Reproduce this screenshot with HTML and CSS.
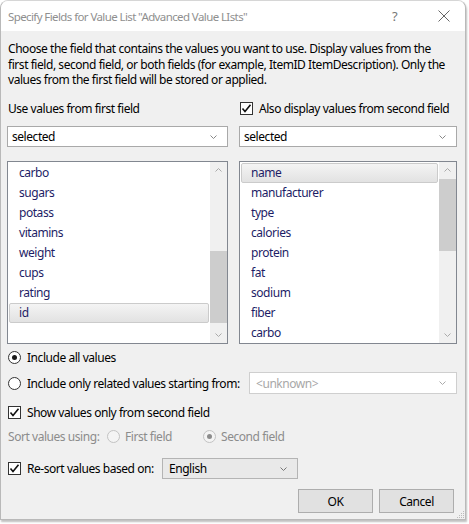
FILE: index.html
```html
<!DOCTYPE html>
<html>
<head>
<meta charset="utf-8">
<link rel="stylesheet" href="styles.css">
</head>
<body>
<div class="window">
  <div class="titlebar">
    <span class="title">Specify Fields for Value List "Advanced Value LIsts"</span>
    <span class="help">?</span>
    <svg class="close" width="12" height="12" viewBox="0 0 12 12"><path d="M0.5 0.5 L11.5 11.5 M11.5 0.5 L0.5 11.5" stroke="#666" stroke-width="1" fill="none"/></svg>
  </div>
  <div class="content">
    <p class="intro">Choose the field that contains the values you want to use. Display values from the<br>first field, second field, or both fields (for example, ItemID ItemDescription). Only the<br>values from the first field will be stored or applied.</p>
    <div class="columns">
      <div class="label">Use values from first field</div>
      <div class="label check-label"><span class="checkbox"><svg width="11" height="11" viewBox="0 0 11 11"><path d="M1.5 5.5 L4 8.5 L9.5 1.8" stroke="#111" stroke-width="1.6" fill="none"/></svg></span>Also display values from second field</div>
      <div class="select"><span>selected</span><svg class="chev" width="7" height="4" viewBox="0 0 7 4"><path d="M0.5 0.5 L3.5 3.5 L6.5 0.5" stroke="#888" fill="none"/></svg></div>
      <div class="select"><span>selected</span><svg class="chev" width="7" height="4" viewBox="0 0 7 4"><path d="M0.5 0.5 L3.5 3.5 L6.5 0.5" stroke="#888" fill="none"/></svg></div>
      <div class="list">
        <ul class="items">
          <li>carbo</li><li>sugars</li><li>potass</li><li>vitamins</li><li>weight</li><li>cups</li><li>rating</li><li class="sel">id</li>
        </ul>
        <div class="scrollbar">
          <svg class="arrow" width="7" height="4" viewBox="0 0 7 4"><path d="M0.5 3.5 L3.5 0.5 L6.5 3.5" stroke="#aaa" fill="none"/></svg>
          <div class="track"><div class="thumb thumb-left"></div></div>
          <svg class="arrow" width="7" height="4" viewBox="0 0 7 4"><path d="M0.5 0.5 L3.5 3.5 L6.5 0.5" stroke="#aaa" fill="none"/></svg>
        </div>
      </div>
      <div class="list">
        <ul class="items">
          <li class="sel">name</li><li>manufacturer</li><li>type</li><li>calories</li><li>protein</li><li>fat</li><li>sodium</li><li>fiber</li><li>carbo</li>
        </ul>
        <div class="scrollbar">
          <svg class="arrow" width="7" height="4" viewBox="0 0 7 4"><path d="M0.5 3.5 L3.5 0.5 L6.5 3.5" stroke="#aaa" fill="none"/></svg>
          <div class="track"><div class="thumb thumb-right"></div></div>
          <svg class="arrow" width="7" height="4" viewBox="0 0 7 4"><path d="M0.5 0.5 L3.5 3.5 L6.5 0.5" stroke="#aaa" fill="none"/></svg>
        </div>
      </div>
    </div>
    <div class="options">
      <div class="row row-all"><span class="radio on"></span>Include all values</div>
      <div class="row row-related"><span class="radio"></span><span class="related-label">Include only related values starting from:</span>
        <div class="select disabled"><span>&lt;unknown&gt;</span><svg class="chev" width="7" height="4" viewBox="0 0 7 4"><path d="M0.5 0.5 L3.5 3.5 L6.5 0.5" stroke="#aaa" fill="none"/></svg></div>
      </div>
      <div class="row row-show"><span class="checkbox"><svg width="11" height="11" viewBox="0 0 11 11"><path d="M1.5 5.5 L4 8.5 L9.5 1.8" stroke="#111" stroke-width="1.6" fill="none"/></svg></span>Show values only from second field</div>
      <div class="row row-sort dim"><span class="sort-label">Sort values using:</span><span class="radio dis"></span><span class="first-field">First field</span><span class="radio dis on"></span>Second field</div>
      <div class="row row-resort"><span class="checkbox"><svg width="11" height="11" viewBox="0 0 11 11"><path d="M1.5 5.5 L4 8.5 L9.5 1.8" stroke="#111" stroke-width="1.6" fill="none"/></svg></span><span class="resort-label">Re-sort values based on:</span>
        <div class="select lang"><span>English</span><svg class="chev" width="7" height="4" viewBox="0 0 7 4"><path d="M0.5 0.5 L3.5 3.5 L6.5 0.5" stroke="#777" fill="none"/></svg></div>
      </div>
      <div class="buttons"><button class="btn">OK</button><button class="btn">Cancel</button></div>
    </div>
    <svg class="grip" width="10" height="10" viewBox="0 0 10 10"><g fill="#bbb"><rect x="8" y="2" width="1" height="1"/><rect x="6" y="4" width="1" height="1"/><rect x="8" y="4" width="1" height="1"/><rect x="4" y="6" width="1" height="1"/><rect x="6" y="6" width="1" height="1"/><rect x="8" y="6" width="1" height="1"/><rect x="2" y="8" width="1" height="1"/><rect x="4" y="8" width="1" height="1"/><rect x="6" y="8" width="1" height="1"/><rect x="8" y="8" width="1" height="1"/></g></svg>
  </div>
</div>
</body>
</html>
```

FILE: styles.css
```css
html, body {
  margin: 0;
  padding: 0;
  background: #ffffff;
  width: 469px;
  height: 524px;
  overflow: hidden;
}
body {
  font-family: "Noto Sans", "Open Sans", sans-serif;
  font-size: 12px;
  letter-spacing: -0.45px;
  color: #000;
}
.window {
  width: 466px;
  height: 520px;
  box-sizing: border-box;
  border: 1px solid #b9b9b9;
  border-top-color: #d6d6d6;
  border-radius: 8px 8px 0 0;
  overflow: hidden;
  background: #f0f0f0;
  box-shadow: 1px 2px 2px rgba(0,0,0,0.25);
}
.titlebar {
  height: 30px;
  background: #fff;
  display: flex;
  align-items: center;
  padding-left: 7px;
  color: #8f8f8f;
  white-space: nowrap;
}
.title { flex: 1; font-size: 11.5px; letter-spacing: -0.6px; }
.help { width: 12px; margin-right: 34px; color: #777; font-size: 13px; }
.close { margin-right: 15px; }
.content {
  position: relative;
  padding: 0 7px 0 6px;
  height: 488px;
}
.intro {
  margin: 0;
  padding: 10px 0 0 1px;
  line-height: 15.5px;
  height: 50px;
  white-space: nowrap;
}
.columns {
  display: grid;
  grid-template-columns: 221px 218px;
  column-gap: 11px;
}
.label {
  display: flex;
  align-items: center;
  height: 18px;
  margin-top: 8px;
  padding-left: 1px;
  white-space: nowrap;
}
.check-label { padding-left: 1px; }
.columns .select { margin-top: 9px; }
.columns .list { margin-top: 14px; }
.checkbox {
  width: 13px;
  height: 13px;
  box-sizing: border-box;
  border: 1px solid #333;
  background: #fff;
  display: inline-flex;
  align-items: center;
  justify-content: center;
  margin-right: 6px;
  flex: none;
}
.select {
  height: 21px;
  box-sizing: border-box;
  border: 1px solid #a9a9a9;
  background: #fff;
  display: flex;
  align-items: center;
  justify-content: space-between;
  padding: 0 10px 0 4px;
}
.list {
  height: 183px;
  box-sizing: border-box;
  border: 1px solid #828790;
  background: #fff;
  display: flex;
}
.items {
  list-style: none;
  margin: 0;
  padding: 1px 1px 0 1px;
  flex: 1;
  overflow: hidden;
}
.items li {
  height: 20px;
  line-height: 19px;
  padding-left: 10px;
  color: #1d1d66;
  box-sizing: border-box;
}
.items li.sel {
  border: 1px solid #cbcbcb;
  border-radius: 2px;
  background: linear-gradient(#f4f4f4, #e2e2e2);
  padding-left: 9px;
  line-height: 17px;
}
.scrollbar {
  width: 17px;
  background: #f0f0f0;
  display: flex;
  flex-direction: column;
  align-items: center;
  flex: none;
}
.arrow { margin: 6px 0; flex: none; }
.track { flex: 1; width: 17px; position: relative; }
.thumb { position: absolute; left: 0; width: 17px; background: #cdcdcd; }
.thumb-left { top: 73px; height: 72px; }
.thumb-right { top: 1px; height: 72px; }
.options { display: flex; flex-direction: column; }
.row { display: flex; align-items: center; padding-left: 1px; white-space: nowrap; }
.row-all { margin-top: 4px; height: 19px; }
.row-related { margin-top: 5px; height: 22px; }
.row-show { margin-top: 9px; height: 18px; }
.row-sort { margin-top: 6px; height: 18px; }
.row-resort { margin-top: 13px; height: 21px; }
.radio {
  width: 13px;
  height: 13px;
  box-sizing: border-box;
  border: 1px solid #333;
  border-radius: 50%;
  background: #fff;
  margin-right: 6px;
  position: relative;
  flex: none;
}
.radio.on::after {
  content: "";
  position: absolute;
  left: 3px; top: 3px;
  width: 5px; height: 5px;
  border-radius: 50%;
  background: #1a1a1a;
}
.radio.dis { border-color: #c3c3c3; background: #f4f4f4; }
.radio.dis.on::after { background: #8c8c8c; }
.related-label { width: 222px; flex: none; }
.row-related .select.disabled {
  width: 208px;
  height: 22px;
  border-color: #cfcfcf;
  color: #a8a8a8;
  padding-left: 6px;
}
.dim { color: #8c8c8c; }
.sort-label { width: 99px; flex: none; }
.row-sort .radio { margin-right: 5px; }
.first-field { width: 78px; flex: none; }
.resort-label { width: 135px; flex: none; }
.select.lang {
  width: 136px;
  height: 21px;
  background: #e9e9e9;
  border-color: #b4b4b4;
  padding-left: 6px;
}
.buttons {
  display: flex;
  justify-content: flex-end;
  gap: 6px;
  margin-top: 10px;
  padding-right: 4px;
}
.btn {
  width: 75px;
  height: 24px;
  box-sizing: border-box;
  border: 1px solid #adadad;
  background: #e1e1e1;
  font-family: inherit;
  font-size: 12px;
  letter-spacing: inherit;
  color: #000;
  padding: 0;
}
.grip { position: absolute; right: 0; bottom: 0; }
```
